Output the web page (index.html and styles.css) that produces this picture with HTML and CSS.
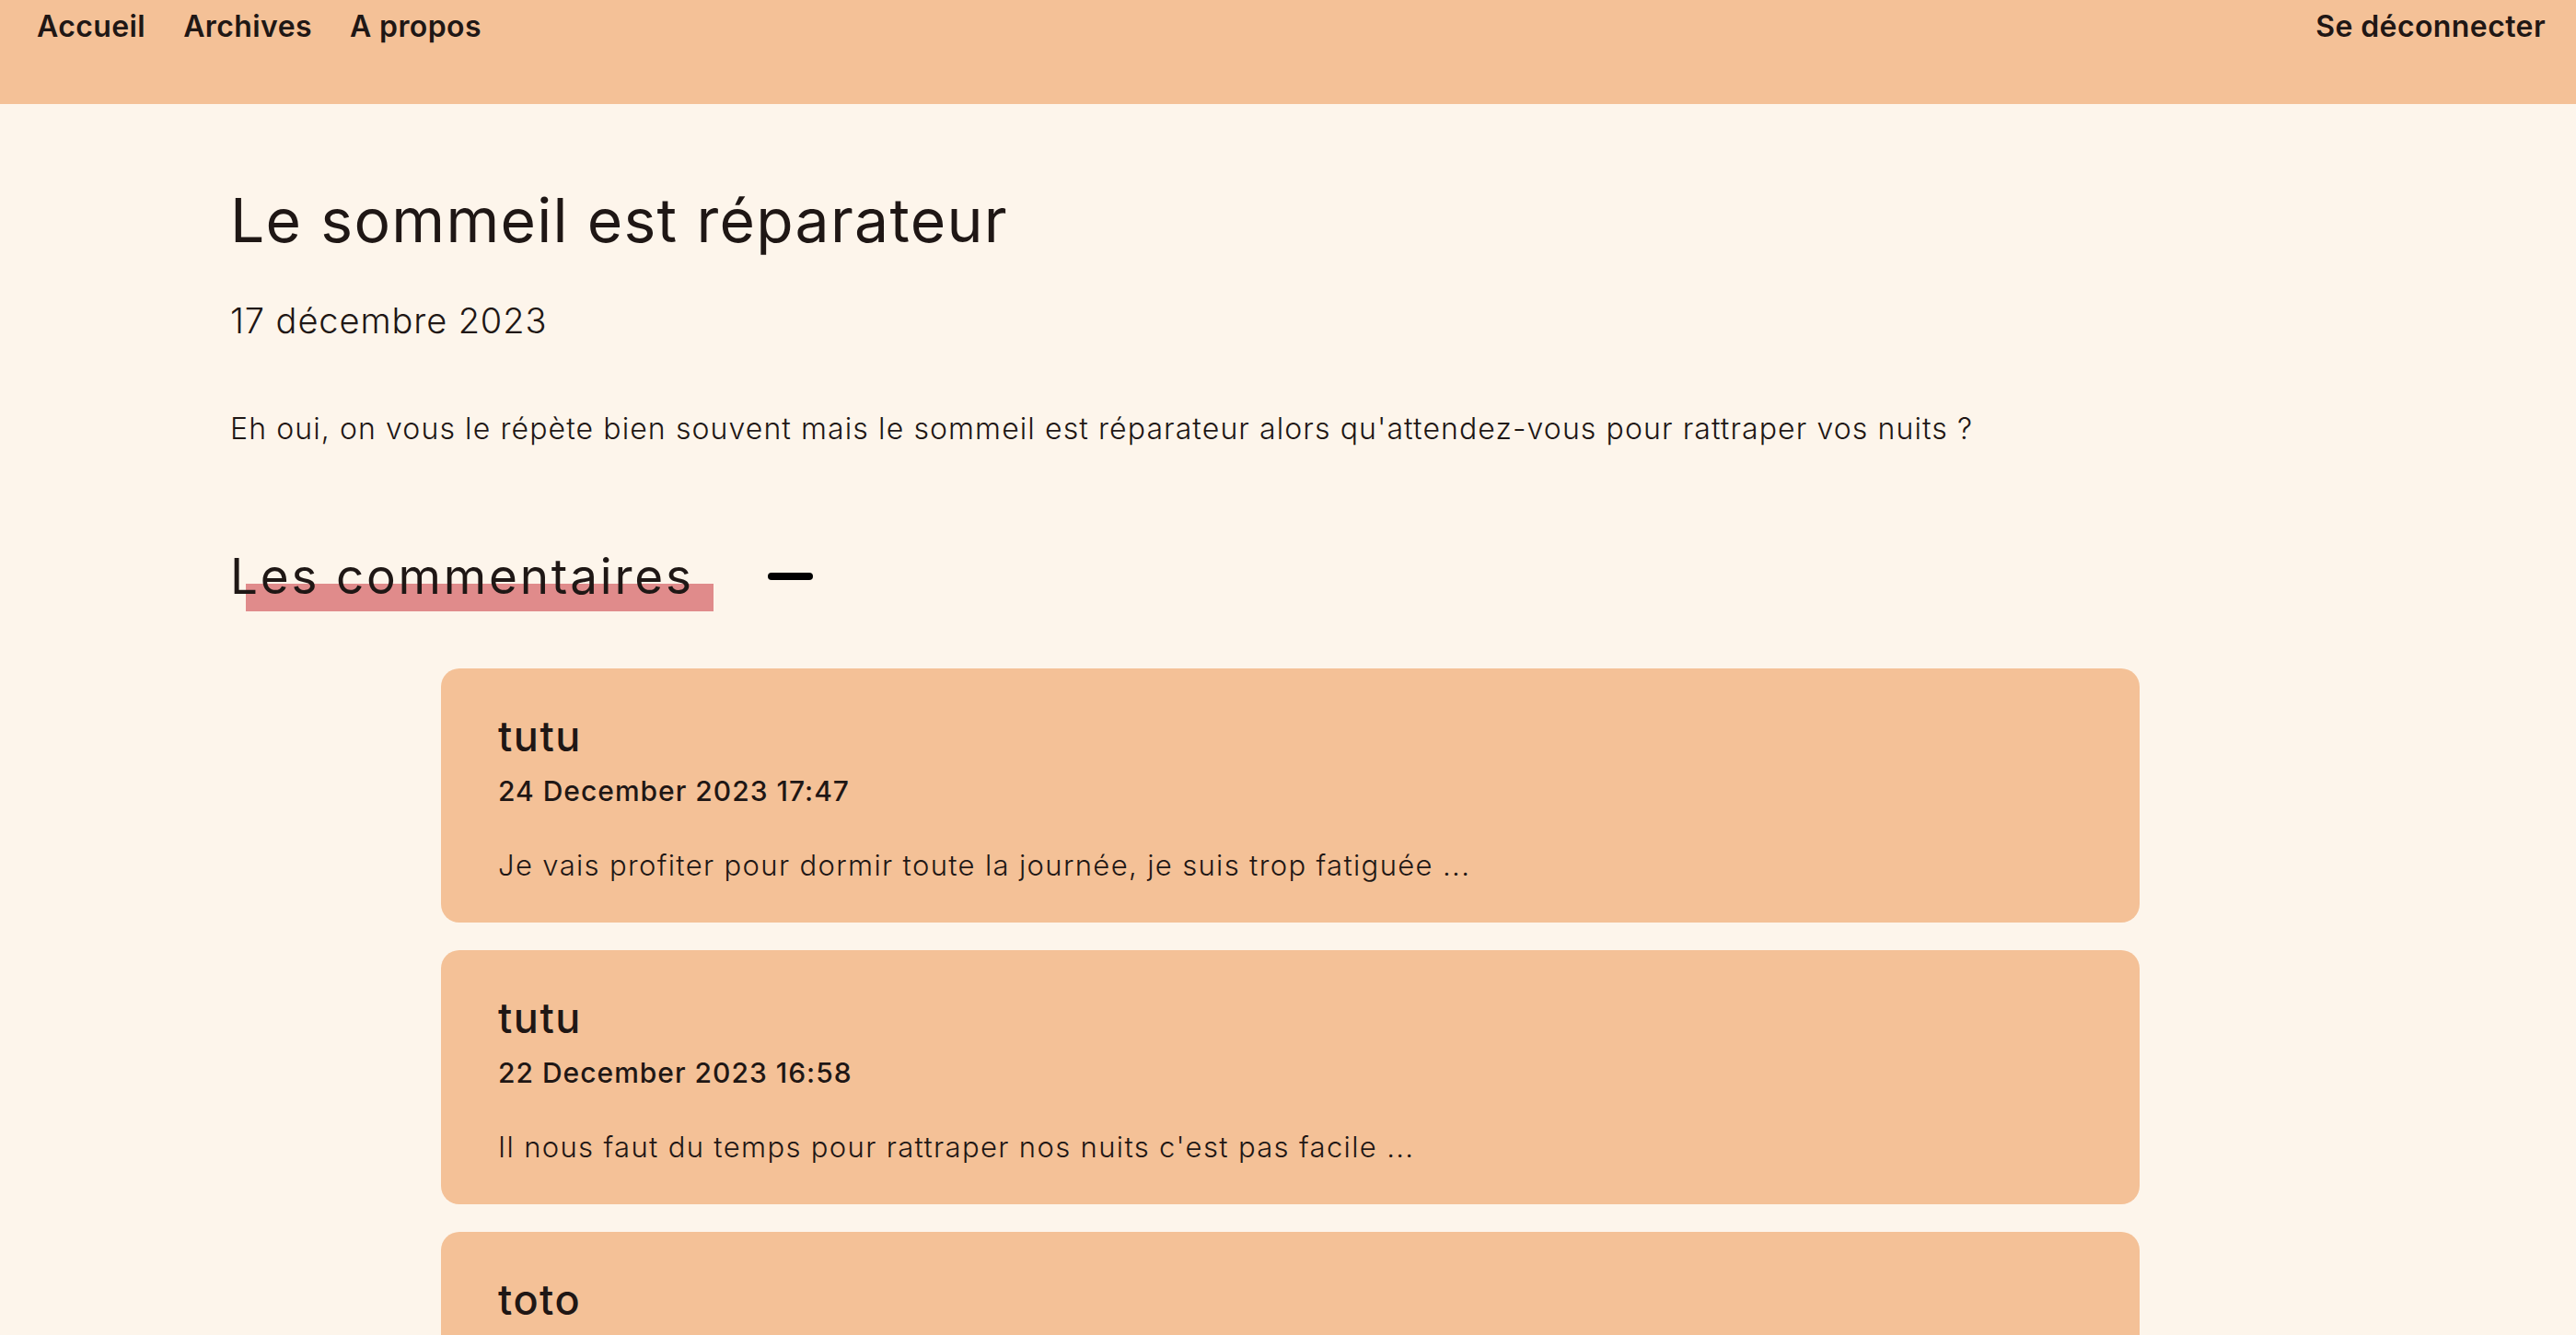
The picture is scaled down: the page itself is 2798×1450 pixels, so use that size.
FILE: index.html
```html
<!DOCTYPE html>
<html lang="fr">
<head>
<meta charset="utf-8">
<title>Le sommeil est réparateur</title>
<link rel="stylesheet" href="styles.css">
</head>
<body>
<header class="topbar">
  <nav class="nav">
    <a class="nav-link" href="#">Accueil</a>
    <a class="nav-link" href="#">Archives</a>
    <a class="nav-link" href="#">A propos</a>
  </nav>
  <a class="nav-link" href="#">Se déconnecter</a>
</header>
<main class="post">
  <h1 class="post-title">Le sommeil est réparateur</h1>
  <p class="post-date">17 décembre 2023</p>
  <p class="post-body">Eh oui, on vous le répète bien souvent mais le sommeil est réparateur alors qu'attendez-vous pour rattraper vos nuits ?</p>
  <div class="comments-head">
    <h2 class="comments-title">Les commentaires</h2>
    <button class="toggle" aria-label="Masquer"><span class="minus"></span></button>
  </div>
  <section class="comments">
    <article class="comment">
      <h3 class="comment-author">tutu</h3>
      <p class="comment-date">24 December 2023 17:47</p>
      <p class="comment-text">Je vais profiter pour dormir toute la journée, je suis trop fatiguée ...</p>
    </article>
    <article class="comment">
      <h3 class="comment-author">tutu</h3>
      <p class="comment-date">22 December 2023 16:58</p>
      <p class="comment-text">Il nous faut du temps pour rattraper nos nuits c'est pas facile ...</p>
    </article>
    <article class="comment">
      <h3 class="comment-author">toto</h3>
      <p class="comment-date">18 December 2023 09:12</p>
      <p class="comment-text">Bonne idée, je vais faire une sieste cet après-midi ...</p>
    </article>
  </section>
</main>
</body>
</html>
```
FILE: styles.css
```css
* { box-sizing: border-box; }
html, body { margin: 0; padding: 0; }
body {
  background: #fdf5eb;
  color: #1f1715;
  font-family: "Inter", "Open Sans", sans-serif;
}
.topbar {
  height: 113px;
  background: #f4c197;
  display: flex;
  justify-content: space-between;
  align-items: flex-start;
  padding: 10px 33px 0 40px;
}
.nav { display: flex; gap: 41px; }
.nav-link {
  color: #1f1715;
  text-decoration: none;
  font-size: 32px;
  font-weight: 600;
  line-height: 1.21;
  letter-spacing: 0.4px;
}
.post { padding: 88px 0 0 250px; }
.post-title {
  margin: 0;
  font-size: 66px;
  font-weight: 400;
  line-height: 77px;
  letter-spacing: 1.3px;
}
.post-date {
  margin: 48px 0 0;
  font-size: 38px;
  font-weight: 300;
  line-height: 1.2;
  letter-spacing: 0.9px;
}
.post-body {
  margin: 70px 0 0;
  font-size: 32px;
  font-weight: 300;
  line-height: 1.5;
  letter-spacing: 1.1px;
}
.comments-head {
  margin-top: 105px;
  display: flex;
  align-items: center;
  gap: 80px;
}
.comments-title {
  position: relative;
  z-index: 0;
  margin: 0;
  font-size: 53px;
  font-weight: 400;
  line-height: 1.2;
  letter-spacing: 2.8px;
}
.comments-title::after {
  content: "";
  position: absolute;
  z-index: -1;
  left: 17px;
  right: -21px;
  top: 39px;
  height: 30px;
  background: #e08b8b;
}
.toggle {
  border: 0;
  padding: 0;
  background: transparent;
  display: flex;
  cursor: pointer;
}
.minus {
  display: block;
  width: 49px;
  height: 8px;
  border-radius: 4px;
  background: #000;
}
.comments {
  width: 1845px;
  margin: 68px 0 0 229px;
  display: flex;
  flex-direction: column;
  gap: 30px;
}
.comment {
  background: #f4c197;
  border-radius: 20px;
  padding: 47px 60px 40px 62px;
}
.comment-author {
  margin: 0;
  font-size: 45px;
  font-weight: 500;
  line-height: 53px;
  letter-spacing: 1.5px;
}
.comment-date {
  margin: 15px 0 0;
  font-size: 30px;
  font-weight: 500;
  line-height: 36px;
  letter-spacing: 1px;
}
.comment-text {
  margin: 40px 0 0;
  font-size: 31px;
  font-weight: 300;
  line-height: 45px;
  letter-spacing: 1.35px;
}
```
